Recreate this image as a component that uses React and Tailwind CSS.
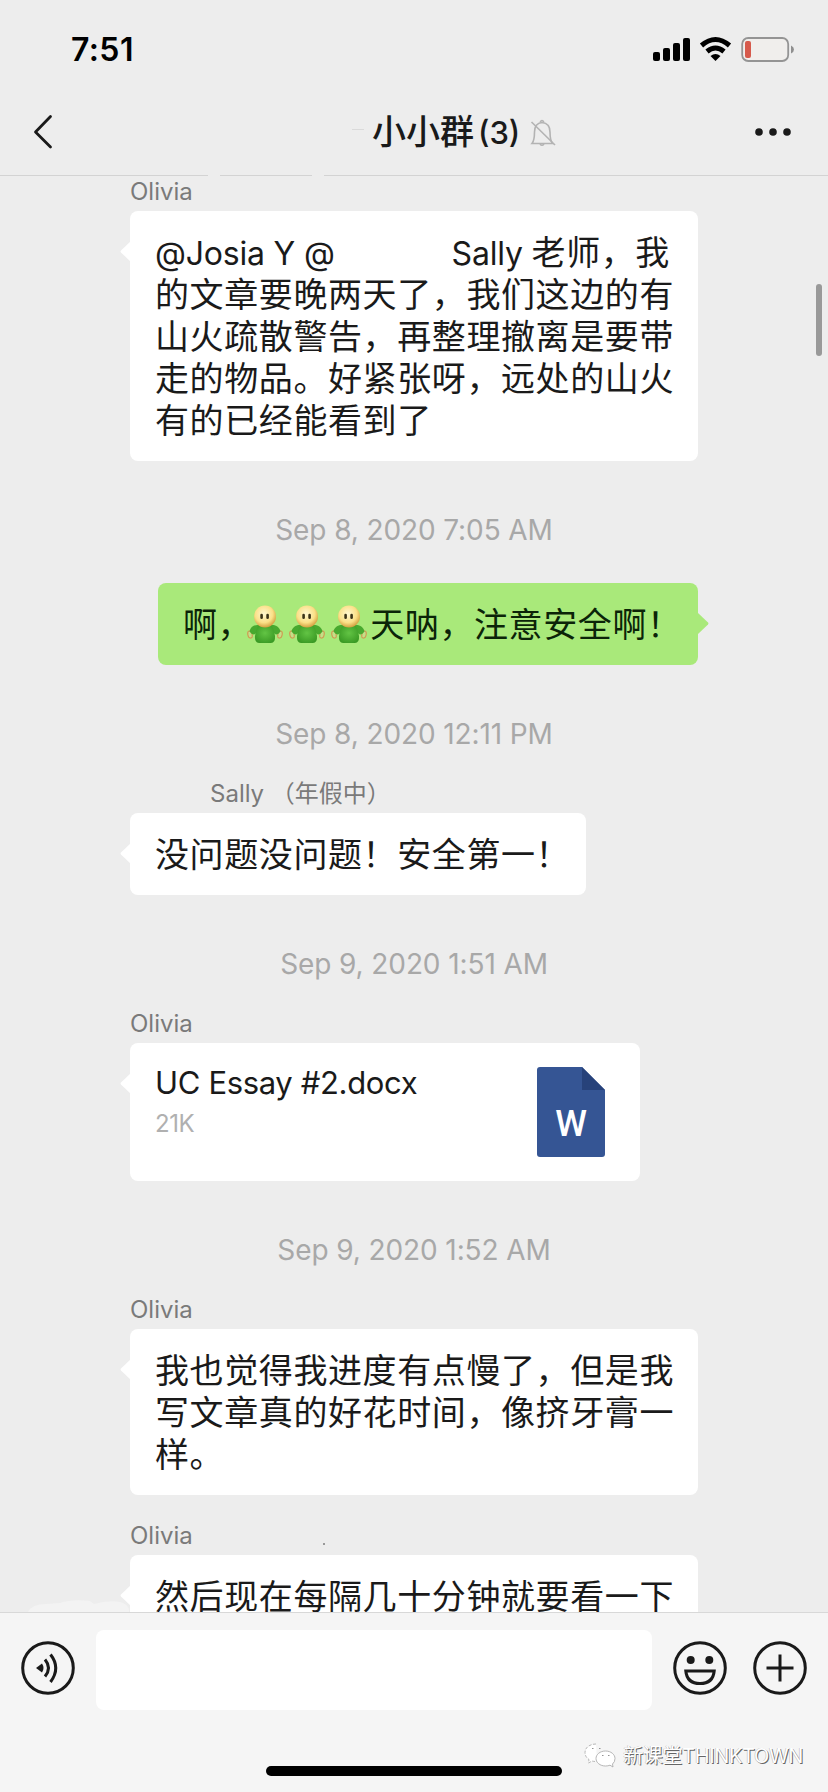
const messages = [
  {
    id: 1,
    type: 'text',
    name: 'Olivia',
    width: 'w-[568px]',
    lines: [
      <>
        <span className="text-[32px] tracking-[-0.2px]">@Josia Y @</span>
        <span className="inline-block w-[117px]" />
        <span className="text-[32px] tracking-[-0.2px]">Sally </span>老师，我
      </>,
      '的文章要晚两天了，我们这边的有',
      '山火疏散警告，再整理撤离是要带',
      '走的物品。好紧张呀，远处的山火',
      '有的已经能看到了',
    ],
  },
  { id: 2, type: 'time', label: 'Sep 8, 2020 7:05 AM', space: 'mt-[50px] mb-9' },
  {
    id: 3,
    type: 'text',
    mine: true,
    width: 'w-[540px]',
    lines: [
      <>
        啊，
        <span className="-ml-2 -mt-px inline-flex align-top">
          <Buddy /><Buddy /><Buddy />
        </span>
        天呐，注意安全啊！
      </>,
    ],
  },
  { id: 4, type: 'time', label: 'Sep 8, 2020 12:11 PM', space: 'mt-[50px] mb-[26px]' },
  {
    id: 5,
    type: 'text',
    name: 'Sally （年假中）',
    nameIndent: 'pl-20',
    width: 'w-[456px]',
    lines: ['没问题没问题！安全第一！'],
  },
  { id: 6, type: 'time', label: 'Sep 9, 2020 1:51 AM', space: 'mt-[50px] mb-[26px]' },
  { id: 7, type: 'file', name: 'Olivia', file: 'UC Essay #2.docx', size: '21K' },
  { id: 8, type: 'time', label: 'Sep 9, 2020 1:52 AM', space: 'mt-[50px] mb-[26px]' },
  {
    id: 9,
    type: 'text',
    name: 'Olivia',
    width: 'w-[568px]',
    lines: ['我也觉得我进度有点慢了，但是我', '写文章真的好花时间，像挤牙膏一', '样。'],
  },
  {
    id: 10,
    type: 'text',
    name: 'Olivia',
    space: 'mt-6',
    width: 'w-[568px]',
    lines: ['然后现在每隔几十分钟就要看一下'],
  },
]

function Buddy() {
  return (
    <svg width="42" height="42" viewBox="0 0 42 42">
      <defs>
        <radialGradient id="head" cx="45%" cy="38%" r="62%">
          <stop offset="0" stopColor="#fff8cf" />
          <stop offset="0.65" stopColor="#fae087" />
          <stop offset="1" stopColor="#d3a040" />
        </radialGradient>
        <radialGradient id="body" cx="50%" cy="45%" r="60%">
          <stop offset="0" stopColor="#62c444" />
          <stop offset="1" stopColor="#3a9a24" />
        </radialGradient>
      </defs>
      <ellipse cx="6" cy="31.500" rx="2.200" ry="3.600" fill="#c3e088" stroke="#cf9d54" strokeWidth="1.200" transform="rotate(-12 6 31.500)" />
      <ellipse cx="36" cy="31.500" rx="2.200" ry="3.600" fill="#c3e088" stroke="#cf9d54" strokeWidth="1.200" transform="rotate(12 36 31.500)" />
      <path d="M15 22C10 21.500 6.500 24 5.500 28.500Q7 31 10 31.500L14 29ZM27 22C32 21.500 35.500 24 36.500 28.500Q35 31 32 31.500L28 29Z" fill="#48a92f" />
      <path d="M14.500 22H27.500Q30.500 27 31 33Q31.500 40 27 40H15Q10.500 40 11 33Q11.500 27 14.500 22Z" fill="url(#body)" />
      <circle cx="21" cy="13.500" r="11" fill="url(#head)" />
      <rect x="16.300" y="10.800" width="2.600" height="5.200" rx="1.300" fill="#3b3418" />
      <rect x="22.300" y="10.800" width="2.600" height="5.200" rx="1.300" fill="#3b3418" />
    </svg>
  )
}

function Tail({ mine }) {
  return mine ? (
    <svg className="absolute top-[30px] -right-[11px]" width="11" height="22" viewBox="0 0 11 22">
      <path d="M0 0L10 9.500Q11 10.500 10 11.500L0 21Z" fill="#a9e97a" />
    </svg>
  ) : (
    <svg className="absolute top-[30px] -left-[10px]" width="11" height="22" viewBox="0 0 11 22">
      <path d="M11 0L1 9.500Q0 10.500 1 11.500L11 21Z" fill="#fff" />
    </svg>
  )
}

function Sender({ name, indent = '' }) {
  return <p className={`h-9 pt-px text-[24px] leading-8 whitespace-pre text-[#7a7a7a] ${indent}`}>{name}</p>
}

function TextMessage({ msg }) {
  return (
    <div className={`flex flex-col ${msg.mine ? 'items-end' : 'items-start'} ${msg.space ?? ''}`}>
      {msg.name && <Sender name={msg.name} indent={msg.nameIndent} />}
      <div className={`relative rounded-lg px-[25px] pt-[21px] pb-[19px] ${msg.width} ${msg.mine ? 'bg-[#a9e97a] text-[#0b2408]' : 'bg-white text-[#1a1a1a]'}`}>
        <Tail mine={msg.mine} />
        {msg.lines.map((line, i) => (
          <p key={i} className="h-[42px] text-[34px] leading-[42px] tracking-[0.6px] whitespace-pre">{line}</p>
        ))}
      </div>
    </div>
  )
}

function FileMessage({ msg }) {
  return (
    <div className="flex flex-col items-start">
      <Sender name={msg.name} />
      <div className="relative flex h-[138px] w-[510px] justify-between rounded-lg bg-white pt-6 pr-[35px] pl-[25px]">
        <Tail />
        <div className="-mt-[5px]">
          <p className="text-[31px] leading-[42px] tracking-[-0.35px] text-[#1a1a1a]">{msg.file}</p>
          <p className="mt-[2px] text-[24px] leading-9 tracking-[-0.4px] text-[#b0b0b0]">{msg.size}</p>
        </div>
        <svg width="68" height="90" viewBox="0 0 68 90">
          <path d="M3 0H45L68 23V87Q68 90 65 90H3Q0 90 0 87V3Q0 0 3 0Z" fill="#355594" />
          <path d="M45 0L68 23H45Z" fill="#27427a" />
          <text x="34" y="69" textAnchor="middle" fontSize="36" fontWeight="500" fill="#fff" fontFamily="Roboto, sans-serif">W</text>
        </svg>
      </div>
    </div>
  )
}

function StatusBar() {
  return (
    <div className="flex h-[98px] items-center justify-between pr-[33px] pl-[71px]">
      <span className="mt-[2px] text-[32px] leading-10 font-semibold tracking-[0.4px] text-black">7:51</span>
      <svg width="142" height="28" viewBox="0 0 142 28">
        <rect x="0" y="17" width="7" height="9" rx="2" />
        <rect x="10" y="13" width="7" height="13" rx="2" />
        <rect x="20" y="8" width="7" height="18" rx="2" />
        <rect x="30" y="3" width="7" height="23" rx="2" />
        <g fill="none" stroke="#000" strokeWidth="5">
          <path d="M48.500 10.500Q62.500 -1.500 76.500 10.500" />
          <path d="M54 16.500Q62.500 9.500 71 16.500" />
        </g>
        <path d="M57.500 21Q62.500 17 67.500 21L62.500 26Z" />
        <rect x="89.200" y="3" width="46" height="23" rx="6" fill="#f0eeec" stroke="#949494" strokeWidth="1.800" />
        <rect x="92" y="6" width="6" height="17" rx="2" fill="#d65a4c" />
        <path d="M138 10.500Q141 12 141 14.500Q141 17 138 18.500Z" fill="#8f8f8f" />
      </svg>
    </div>
  )
}

function NavBar() {
  return (
    <div className="flex h-[77px] items-start pt-4">
      <svg className="ml-[33px]" width="20" height="36" viewBox="0 0 20 36">
        <path d="M17.500 2.500L2.500 18L17.500 33" fill="none" stroke="#1a1a1a" strokeWidth="2.800" strokeLinecap="round" strokeLinejoin="round" />
      </svg>
      <div className="ml-[299px] flex w-[205px] items-center">
        <span className="relative -top-[3px] h-px w-3 bg-[#dadada]" />
        <h1 className="ml-[8px] text-[34px] leading-9 font-medium whitespace-nowrap text-[#1a1a1a]">
          小小群<span className="ml-[4px] text-[31px]">(3)</span>
        </h1>
        <svg className="ml-auto" width="28" height="30" viewBox="0 0 28 30" fill="none" stroke="#b3b3b3" strokeWidth="1.600">
          <path d="M3 25.500C5.500 22.500 5.500 19 5.500 14C5.500 8 9 5 13 4.500C17.500 5 21 8 21 14C21 19 21 22 23.500 25.500Z" />
          <path d="M11 4.500Q13 0.500 15 4.500M11 26Q13 28.500 15 26" />
          <path d="M2.500 4L26 27" />
        </svg>
      </div>
      <svg className="mt-[13px] mr-[36px] ml-auto" width="38" height="10" viewBox="0 0 38 10" fill="#1a1a1a">
        <circle cx="5" cy="5" r="3.800" />
        <circle cx="19" cy="5" r="3.800" />
        <circle cx="33" cy="5" r="3.800" />
      </svg>
    </div>
  )
}

function Toolbar() {
  return (
    <div className="flex h-[117px] items-start pt-[17px]">
      <svg className="mt-[11px] ml-5" width="56" height="56" viewBox="0 0 56 56" fill="none" stroke="#1a1a1a" strokeWidth="3">
        <circle cx="28" cy="27" r="25.300" />
        <path d="M16 27L22 22.500Q25 27 22 31.500Z" fill="#1a1a1a" stroke="none" />
        <path d="M25 18.500Q32 27 25 35.500M30.500 13.500Q41 27 30.500 41" />
      </svg>
      <div className="ml-5 h-20 w-[556px] rounded-lg bg-white" />
      <svg className="mt-[11px] ml-5" width="56" height="56" viewBox="0 0 56 56" fill="none" stroke="#1a1a1a" strokeWidth="3">
        <circle cx="28" cy="27" r="25.300" />
        <circle cx="18.700" cy="19" r="4" fill="#1a1a1a" stroke="none" />
        <circle cx="37.300" cy="19" r="4" fill="#1a1a1a" stroke="none" />
        <path d="M13.800 30H42.200Q41 42.500 28 42.500Q15 42.500 13.800 30Z" />
      </svg>
      <svg className="mt-[11px] ml-6" width="56" height="56" viewBox="0 0 56 56" fill="none" stroke="#1a1a1a" strokeWidth="3">
        <circle cx="28" cy="27" r="25.300" />
        <path d="M28 13.500V40.500M14.500 27H41.500" />
      </svg>
    </div>
  )
}

function Watermark() {
  return (
    <div className="mr-[25px] flex items-center justify-end gap-[7px]">
      <svg width="32" height="26" viewBox="0 0 32 26" fill="#fff" stroke="#a5a5a5" strokeWidth="0.800">
        <path d="M12 1C5.500 1 1 4.800 1 9.500C1 12.500 2.500 14.800 5 16.500L4.500 20L8 18Q10 18.600 13 18.500" strokeDasharray="3 1.500" />
        <path d="M21.500 8C16 8 12 11.500 12 15.500C12 19.500 16 23 21.500 23Q24 23 26 22.200L29 24L28.500 21Q31 19 31 15.500C31 11.500 27 8 21.500 8Z" />
        <path d="M8 5.500h1.500M15 5.500h1.500M18 12.500h1.500M24 12.500h1.500" stroke="#777" />
      </svg>
      <span className="text-[20px] leading-7 tracking-[-0.35px] text-white [text-shadow:1px_1px_0_#666,-0.5px_-0.5px_0_#b5b5b5]">
        新课堂THINKTOWN
      </span>
    </div>
  )
}

export default function App() {
  return (
    <div
      lang="zh-CN"
      className="relative flex h-[1792px] w-[828px] flex-col overflow-hidden bg-[#ededed] font-['Inter','Noto_Sans_CJK_SC',sans-serif]"
    >
      <header className="h-[175px] shrink-0">
        <StatusBar />
        <NavBar />
      </header>
      <div className="flex h-px shrink-0 gap-3">
        <span className="w-[208px] bg-[#d3d3d3]" />
        <span className="w-[92px] bg-[#d3d3d3]" />
        <span className="flex-1 bg-[#d3d3d3]" />
      </div>

      <main className="relative h-[1436px] shrink-0 overflow-hidden px-[130px]">
        <div className="-mt-px">
          {messages.map(msg => {
            if (msg.type === 'time') {
              return (
                <p key={msg.id} className={`relative top-px text-center text-[28px] leading-9 tracking-[-0.1px] text-[#a8a8a8] ${msg.space}`}>
                  {msg.label}
                </p>
              )
            }
            return msg.type === 'file'
              ? <FileMessage key={msg.id} msg={msg} />
              : <TextMessage key={msg.id} msg={msg} />
          })}
        </div>
        <span className="absolute top-[108px] right-[6px] h-[72px] w-[6px] rounded-full bg-[#999]" />
        <span className="absolute top-[1367px] left-[323px] size-[2px] bg-[#999]" />
        <svg className="absolute bottom-0 left-7" width="102" height="12" viewBox="0 0 102 12">
          <path d="M0 12Q4 4 18 4L32 3Q44 -1 62 1L66 4Q80 0 92 2Q102 5 101 12Z" fill="#f3f3f3" />
        </svg>
      </main>

      <footer className="flex h-[180px] shrink-0 flex-col border-t border-[#d8d8d8] bg-[#f5f5f5]">
        <Toolbar />
        <div className="mt-[12px]">
          <Watermark />
        </div>
        <div className="mx-auto -mt-[4px] h-[10px] w-[296px] rounded-full bg-black" />
      </footer>
    </div>
  )
}
